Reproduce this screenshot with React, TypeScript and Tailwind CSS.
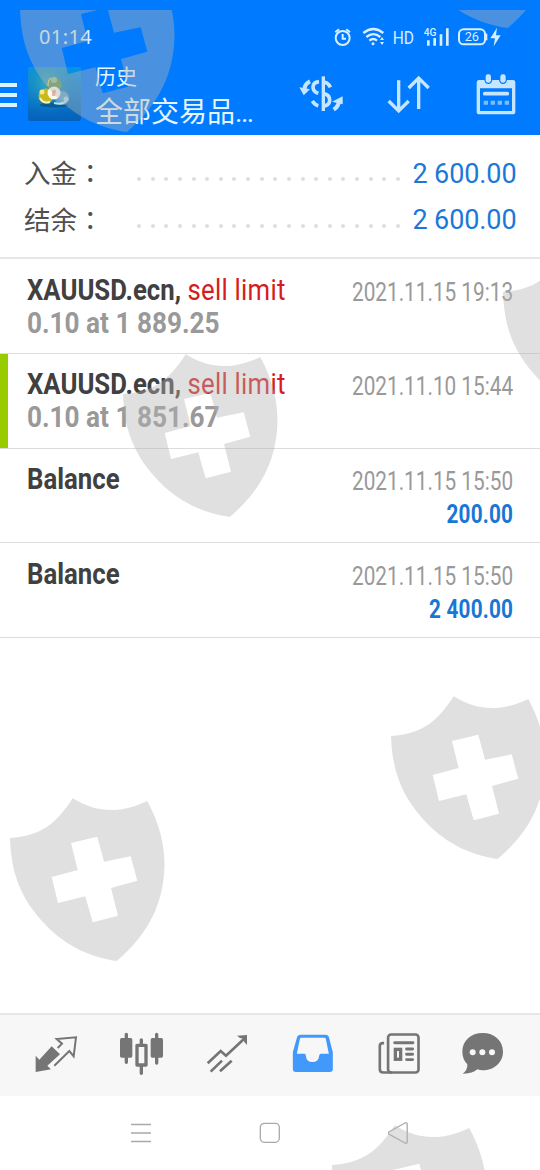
import React from 'react';

interface HistoryItem {
  title: string;
  action?: string;
  detail?: string;
  date: string;
  amount?: string;
  marked?: boolean;
}

const summary = [
  { label: '入金', value: '2 600.00' },
  { label: '结余', value: '2 600.00' },
];

const items: HistoryItem[] = [
  { title: 'XAUUSD.ecn,', action: 'sell limit', detail: '0.10 at 1 889.25', date: '2021.11.15 19:13' },
  { title: 'XAUUSD.ecn,', action: 'sell limit', detail: '0.10 at 1 851.67', date: '2021.11.10 15:44', marked: true },
  { title: 'Balance', date: '2021.11.15 15:50', amount: '200.00' },
  { title: 'Balance', date: '2021.11.15 15:50', amount: '2 400.00' },
];

const Shield = ({ className }: { className: string }) => (
  <svg className={`absolute h-[165px] w-[156px] ${className}`} viewBox="0 0 156 165">
    <path
      fill="#b4b4b4"
      fillOpacity="0.41"
      fillRule="evenodd"
      d="M0 41C31 39 46 27 62.7 1.3C88 17 112 16 137.3 4C150 28 154.5 48 154.5 68C154 104 140 136 106.7 164C78 160 52 147 31 123C9 98 1 73 0 41Z
         M61 46L87.3 39.7L94 64.7L120.7 59.3L127.3 83.7L101 91L108 118.7L82.7 125.3L75.3 99.3L48 106L41.7 80L67.7 73Z"
    />
  </svg>
);

const StatusBar = () => (
  <div className="flex h-[63px] items-center pt-[11px] pl-[39px] text-[#d9efff]">
    <span className="w-[295px] font-['Noto_Sans'] text-[20px] leading-none tracking-[0.4px]">01:14</span>
    <svg className="h-[22px] w-[170px]" viewBox="192 78 510 66" fill="none" stroke="#d9efff" strokeWidth="6">
      {/* alarm */}
      <circle cx="218" cy="114" r="21" />
      <path d="M218 102V116H228M196 97L207 88M240 97L229 88" />
      {/* wifi */}
      <path d="M280 99Q310 75 340 99M289 111Q310 94 331 111M298 122Q310 112 321 122" strokeWidth="7" />
      <circle cx="309" cy="131" r="4.5" fill="#d9efff" stroke="none" />
      <path d="M330 120L336 111L342 120ZM330 126L336 135L342 126Z" fill="#d9efff" stroke="none" />
      <text x="368" y="131" fill="#d9efff" stroke="none" fontSize="57" fontFamily="Roboto" textLength="64" lengthAdjust="spacingAndGlyphs">HD</text>
      {/* mobile signal */}
      <text x="461" y="109" fill="#d9efff" stroke="none" fontSize="34" fontWeight="500" fontFamily="Roboto" textLength="38" lengthAdjust="spacingAndGlyphs">4G</text>
      <path d="M475 121V137M494 114V137M513 103V137M532 85V137" strokeWidth="8" />
      {/* battery */}
      <rect x="567" y="88" width="78" height="45" rx="14" />
      <path d="M649 101V121" strokeWidth="6" />
      <text x="584" y="124" fill="#d9efff" stroke="none" fontSize="38" fontFamily="Roboto" textLength="43" lengthAdjust="spacingAndGlyphs">26</text>
      <path d="M681 83L661 115H675L671 139L692 106H678Z" fill="#d9efff" stroke="none" />
    </svg>
  </div>
);

const AppLogo = () => (
  <svg className="ml-[11px] h-[54px] w-[53px]" viewBox="0 0 53 54">
    <defs>
      <linearGradient id="logoBg" x1="0" y1="0" x2="0" y2="1">
        <stop offset="0" stopColor="#0795e8" />
        <stop offset="1" stopColor="#0561b9" />
      </linearGradient>
      <radialGradient id="logoGlow" cx="0.35" cy="0.3" r="0.6">
        <stop offset="0" stopColor="#35a9bd" />
        <stop offset="1" stopColor="#1180b8" stopOpacity="0" />
      </radialGradient>
    </defs>
    <rect width="53" height="54" rx="2" fill="url(#logoBg)" />
    <rect width="53" height="54" rx="2" fill="url(#logoGlow)" />
    <ellipse cx="26" cy="38" rx="14" ry="2.5" fill="#064a78" opacity="0.6" />
    <circle cx="26" cy="18" r="7.5" fill="#5f9a5c" />
    <circle cx="26" cy="13" r="3" fill="#9cc48a" />
    <path d="M20 19Q20 13 23 11" fill="none" stroke="#b7d187" strokeWidth="1.5" />
    <circle cx="18" cy="29" r="7.5" fill="#c9b81e" />
    <circle cx="14" cy="25" r="2.5" fill="#f4ea8c" />
    <path d="M12 31Q15 37 22 35" fill="none" stroke="#f5f3b8" strokeWidth="2" />
    <circle cx="34" cy="31" r="7" fill="#5aa5d0" />
    <circle cx="38" cy="32" r="2.5" fill="#a8d8ee" />
    <path d="M26 36Q34 38 38 34" fill="none" stroke="#bce1ec" strokeWidth="2" />
    <circle cx="26" cy="26" r="6.5" fill="#fff8ee" />
    <path d="M24 29V24Q27 21 28 24L27 29Z" fill="#e8b7a0" />
  </svg>
);

const CurrencyIcon = () => (
  <svg className="size-[46px]" viewBox="85 212 138 138" fill="none" stroke="#c6e6ff" strokeWidth="10">
    <path d="M158 228V332" />
    <path d="M145 244Q127 246 127 261Q128 275 143 279M143 316Q132 313 125 302" strokeWidth="11" />
    <path d="M162 246Q174 249 179 261M162 280Q177 284 177 299Q177 313 162 317" strokeWidth="11" />
    <path d="M118 243Q100 251 101 272" strokeWidth="12" />
    <path d="M86 261L99 285L118 267Z" fill="#c6e6ff" stroke="none" />
    <path d="M189 328Q206 317 205 299" strokeWidth="12" />
    <path d="M184 304L216 288L216 312Z" fill="#c6e6ff" stroke="none" />
  </svg>
);

const SortIcon = () => (
  <svg className="size-[46px]" viewBox="348 212 138 138" fill="none" stroke="#c6e6ff" strokeWidth="10">
    <path d="M386 240V329M356 302L386 332L416 302M446 326V235M416 263L446 233L476 263" />
  </svg>
);

const CalendarIcon = () => (
  <svg className="size-[46px]" viewBox="610 212 138 138">
    <path
      fill="#c6e6ff"
      fillRule="evenodd"
      d="M627 239H644Q646 251 656 251Q666 251 668 239H688Q690 251 700 251Q710 251 712 239H730Q737 239 737 247V334Q737 342 729 342H629Q621 342 621 334V247Q621 239 627 239ZM631 264V332H727V264Z"
    />
    <rect x="648" y="222" width="16" height="25" rx="7" fill="#c6e6ff" />
    <rect x="692" y="222" width="16" height="25" rx="7" fill="#c6e6ff" />
    <path d="M645 280H713" stroke="#c6e6ff" strokeWidth="11" strokeLinecap="round" />
    <path d="M642 307H718" stroke="#79bdff" strokeWidth="12" strokeDasharray="13 8" />
  </svg>
);

const Header = () => (
  <header className="h-[135px] shrink-0 bg-[#007aff]">
    <StatusBar />
    <div className="flex h-[62px] items-center">
      <div className="flex w-[17px] flex-col gap-[6px] pt-[2px]">
        <span className="h-[4px] bg-[#d9f3ff]" />
        <span className="h-[4px] bg-[#d9f3ff]" />
        <span className="h-[4px] bg-[#d9f3ff]" />
      </div>
      <AppLogo />
      <div className="ml-[14px] flex-1 whitespace-nowrap pt-[5px] font-['Noto_Sans_CJK_SC',sans-serif] text-[#e3f5ff]">
        <div className="text-[21px] leading-[26px]">历史</div>
        <div className="pt-[4px] text-[28px] leading-[36px]">全部交易品<span className="font-['Roboto'] tracking-[-1.5px]">...</span></div>
      </div>
      <div className="flex gap-[41px] pr-[21px]">
        <CurrencyIcon />
        <SortIcon />
        <CalendarIcon />
      </div>
    </div>
  </header>
);

const SummaryRow = ({ label, value }: { label: string; value: string }) => (
  <div className="flex h-[46.5px] items-center pl-[24px] pr-[23.5px]">
    <div className="w-[113px] pb-[2px] font-['Noto_Sans_CJK_SC',sans-serif] text-[26.5px] leading-none text-[#505050]">
      {label}
      <span className="font-['Noto_Sans_CJK_TC',sans-serif]">：</span>
    </div>
    <div className="flex w-[263px] justify-between pt-[12px]">
      {Array.from({ length: 20 }, (_, i) => (
        <span key={i} className="size-[4px] rounded-full bg-[#dedede]" />
      ))}
    </div>
    <span className="ml-auto pt-[2px] text-[27px] leading-none tracking-[-0.1px] text-[#1b78d8]">{value}</span>
  </div>
);

const HistoryRow = ({ item }: { item: HistoryItem }) => (
  <div className="flex h-[94.55px] border-b border-[#dcdcdc] whitespace-nowrap">
    <span className={`w-2 shrink-0 ${item.marked ? 'bg-[#99cc00]' : ''}`} />
    <div className="flex min-w-0 flex-1 justify-between pl-[19px] pr-[27px] pt-[13.4px]">
      <div className="w-[260px] text-[30px] font-bold leading-[33px]">
        <div className="w-max origin-left scale-x-[0.858] text-[#404040]">
          {item.title} {item.action && <span className="font-normal tracking-[0.3px] text-[#d51c20]">{item.action}</span>}
        </div>
        <div className="w-max origin-left scale-x-[0.872] text-[#999]">{item.detail}</div>
      </div>
      <div className="shrink-0 origin-right scale-x-[0.83] pt-[3px] text-right text-[25px] leading-[33px]">
        <div className="text-[#999]">{item.date}</div>
        <div className="font-bold tracking-[0.2px] text-[#1877d5]">{item.amount}</div>
      </div>
    </div>
  </div>
);

const TabBar = () => (
  <nav className="flex h-[83px] shrink-0 items-start justify-between border-t-2 border-[#e6e6e6] bg-[#f7f7f7] pl-[34px] pr-[35px] pt-4">
    {/* quotes */}
    <svg className="size-11" viewBox="103 78 132 132" fill="none" stroke="#757575" strokeWidth="6">
      <path d="M108 152L119 164L156 124L181 148L143 182L154 193L108 201Z" fill="#757575" stroke="none" />
      <path d="M174 129L187 116L171 102L229 97L222 154L209 138L164 182" />
    </svg>
    {/* charts */}
    <svg className="size-11" viewBox="357 78 132 132" fill="none" stroke="#757575" strokeWidth="10" strokeLinecap="round">
      <path d="M379 88V172M470 88V174M424 105V118M424 184V205" />
      <rect x="360" y="99" width="37" height="59" rx="5" fill="#757575" stroke="none" />
      <rect x="452" y="99" width="37" height="59" rx="5" fill="#757575" stroke="none" />
      <rect x="411" y="121" width="27" height="59" strokeLinejoin="round" />
    </svg>
    {/* trade */}
    <svg className="size-11" viewBox="615 78 132 132" fill="none" stroke="#757575" strokeWidth="8">
      <path d="M623 175L662 138L678 152L735 99M632 200L666 167M660 199L695 167" />
      <path d="M711 92L741 90V120L733 111L730 101L720 99Z" fill="#757575" stroke="none" />
    </svg>
    {/* history */}
    <svg className="size-11" viewBox="60.5 78 132 132">
      <path
        fill="#4199fc"
        fillRule="evenodd"
        d="M91 89H168Q174 89 177 95L189 142V192Q189 201 180 201H78Q69 201 69 192V142L82 95Q85 89 91 89ZM94 98Q91 98 90 102L81 146H104Q108 146 108 152Q110 171 128 171Q146 171 148 152Q149 146 153 146H177L168 102Q167 98 163 98Z"
      />
    </svg>
    {/* news */}
    <svg className="size-11" viewBox="317.5 78 133 132" fill="none" stroke="#757575" strokeWidth="8">
      <rect x="354" y="88" width="92" height="115" rx="9" />
      <path d="M342 114H337Q329 115 329 123V193Q329 203 340 203H366" />
      <path d="M374 113H429" strokeWidth="9" strokeLinecap="round" />
      <rect x="376" y="133" width="16" height="30" strokeWidth="10" />
      <path d="M410 132H428M410 148H428M410 164H428" strokeWidth="9" strokeLinecap="round" />
    </svg>
    {/* chat */}
    <svg className="size-11" viewBox="573 78 132 132">
      <path
        fill="#757575"
        d="M638 84C673 84 699 107 699 140C699 172 672 196 638 196Q630 196 622 193Q606 207 578 206Q593 196 592 178Q577 162 577 140C577 107 603 84 638 84Z"
      />
      <circle cx="608" cy="142" r="9" fill="#f7f7f7" />
      <circle cx="637" cy="142" r="9" fill="#f7f7f7" />
      <circle cx="666" cy="142" r="9" fill="#f7f7f7" />
    </svg>
  </nav>
);

const SystemNav = () => (
  <div className="flex h-[74px] shrink-0 items-center justify-between pl-[130px] pr-[131px]">
    <svg className="size-[22px]" viewBox="0 0 22 22" stroke="#a9a9a9" strokeWidth="1.3">
      <path d="M1 2.5H21M1 11H21M1 19.5H21" />
    </svg>
    <svg className="size-[22px]" viewBox="0 0 22 22" fill="none" stroke="#a9a9a9" strokeWidth="1.3">
      <rect x="1.3" y="1.3" width="19" height="19" rx="4" />
    </svg>
    <svg className="size-[22px]" viewBox="0 0 22 22" fill="none" stroke="#a9a9a9" strokeWidth="1.3" strokeLinejoin="round">
      <path d="M18.5 0.8L2.2 9.8Q1 11 2.2 12.2L18.5 21.2Q20.2 21.5 20.2 20V2Q20.2 0.5 18.5 0.8Z" />
    </svg>
  </div>
);

export default function App() {
  return (
    <div className="relative flex h-[1170px] w-[540px] flex-col overflow-hidden bg-white font-['Roboto',sans-serif]">
      <Header />
      <section className="h-[124px] shrink-0 border-b-2 border-[#e6e6e6] pt-[15px]">
        {summary.map((row) => (
          <SummaryRow key={row.label} {...row} />
        ))}
      </section>
      <main className="flex-1 pt-[0.5px]">
        {items.map((item, i) => (
          <HistoryRow key={i} item={item} />
        ))}
      </main>
      <TabBar />
      <SystemNav />

      {/* watermark layer, starts 10px below the top edge */}
      <div className="pointer-events-none absolute inset-x-0 bottom-0 top-[10px] overflow-hidden">
        <Shield className="left-[20px] top-[-42px]" />
        <Shield className="left-[401px] top-[-146px]" />
        <Shield className="left-[503px] top-[241px]" />
        <Shield className="left-[123px] top-[343px]" />
        <Shield className="left-[391px] top-[685px]" />
        <Shield className="left-[10px] top-[787px]" />
        <Shield className="left-[332px] top-[1114px]" />
      </div>
    </div>
  );
}
